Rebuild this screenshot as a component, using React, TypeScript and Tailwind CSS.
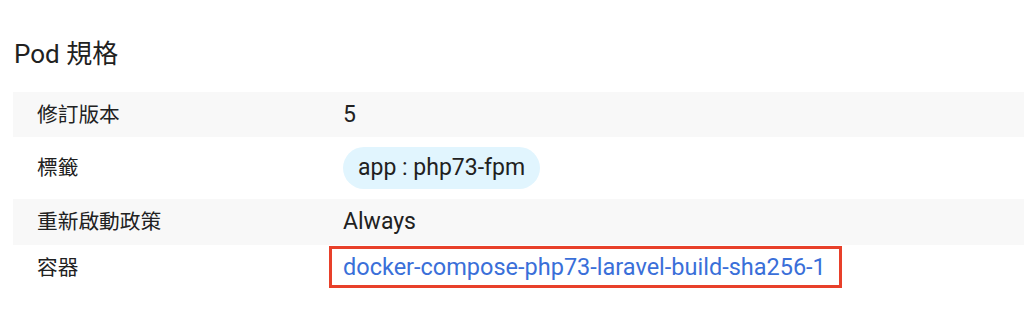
import React from 'react';

const rows = [
  { label: '修訂版本', kind: 'text', value: '5', h: 'h-[45px]', bg: 'bg-[#f8f8f8]' },
  { label: '標籤', kind: 'chip', value: 'app : php73-fpm', h: 'h-[62px]', bg: 'bg-white' },
  { label: '重新啟動政策', kind: 'text', value: 'Always', h: 'h-[46px]', bg: 'bg-[#f8f8f8]' },
  { label: '容器', kind: 'link', value: 'docker-compose-php73-laravel-build-sha256-1', h: 'h-[46px]', bg: 'bg-white' },
];

const App = () => {
  return (
    <div className="w-[1024px] h-[312px] bg-white overflow-hidden font-['Roboto','Noto_Sans_CJK_TC',sans-serif] text-[#212121]">
      <div className="pt-[38px] pl-[13px]">
        {/* 標題 */}
        <h2 className="pl-px text-[26px] leading-[32px] font-normal mb-[22px]">Pod 規格</h2>

        {/* 規格列表 */}
        <div className="flex flex-col">
          {rows.map((row, i) => (
            <div key={i} className={`flex items-center ${row.h} ${row.bg}`}>
              <div className="w-[330px] pl-[24px] text-[20.7px] leading-[26px]">{row.label}</div>
              <div className="flex-1 text-[23px] leading-[28px]">
                {row.kind === 'text' && <span>{row.value}</span>}
                {row.kind === 'chip' && (
                  <span className="inline-flex items-center h-[42px] px-[15px] rounded-full bg-[#e1f5fe]">
                    {row.value}
                  </span>
                )}
                {row.kind === 'link' && (
                  <span className="inline-flex items-center h-[42px] -ml-[14px] -mt-[2px] pl-[11px] pr-[13px] border-[3px] border-[#e8402a]">
                    <a href="#" className="text-[23.5px] text-[#3a6fd9]">{row.value}</a>
                  </span>
                )}
              </div>
            </div>
          ))}
        </div>
      </div>
    </div>
  );
};

export default App;
